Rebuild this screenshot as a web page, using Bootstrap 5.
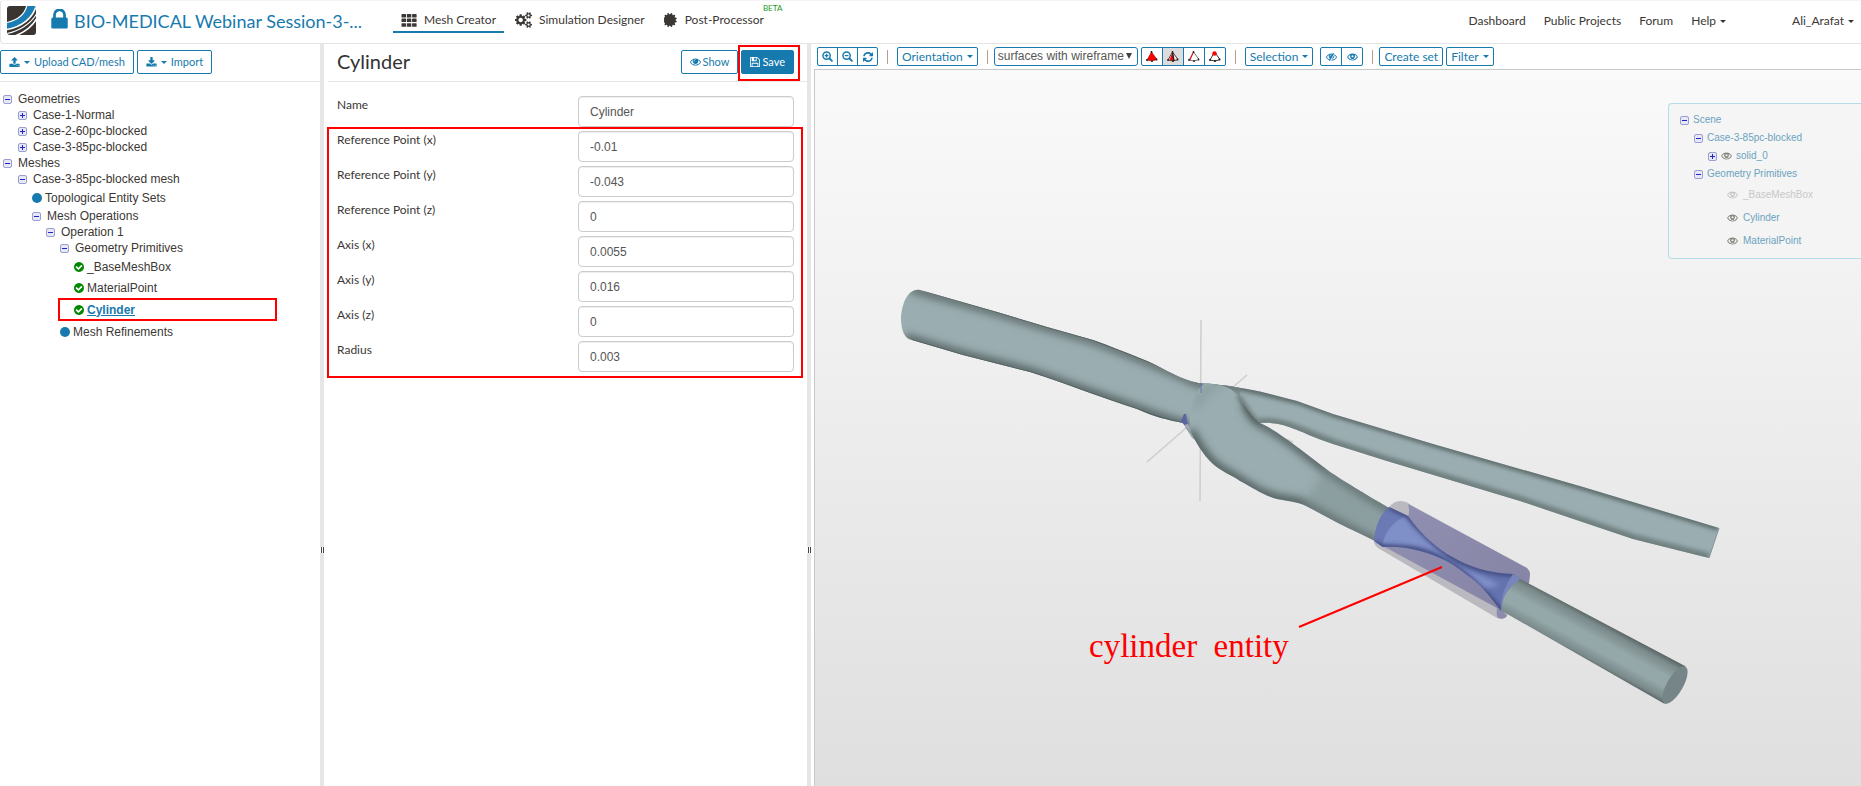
<!DOCTYPE html>
<html lang="en">
<head>
<meta charset="utf-8">
<meta name="viewport" content="width=device-width, initial-scale=1">
<title>Mesh Creator</title>
<link href="https://cdn.jsdelivr.net/npm/bootstrap@5.3.0/dist/css/bootstrap.min.css" rel="stylesheet">
<style>
  :root { --brand: #177aae; --ink: #3b3734; --note: #f00; }
  body { font-family: Lato, "Liberation Sans", sans-serif; font-size: 12px; line-height: 16px; color: var(--ink); background: #fff; }
  a { color: inherit; text-decoration: none; }
  svg.ico { fill: currentColor; flex: none; }
  .caret { width: 0; height: 0; border: 3px solid transparent; border-top-color: currentColor; border-bottom: 0; flex: none; }

  .topbar { height: 44px; border: 1px solid #e5e5e5; border-top-color: #f4f4f4; border-right: 0; border-radius: 4px 0 0 4px; padding: 0 7px 0 6px; }
  .project-lock { color: var(--brand); margin-left: 14px; }
  .project-title { font-size: 18px; line-height: 24px; color: var(--brand); width: 295px; margin-left: 6px; }
  .tabs { gap: 11px; }
  .tab-link { height: 24px; padding: 0 8px; gap: 7px; border-bottom: 2px solid transparent; }
  .tab-link.active { border-color: var(--brand); }
  .beta { position: absolute; left: 100%; bottom: 18px; margin-left: -9px; font-size: 8px; line-height: 10px; color: #1a9a1a; }
  .site-links { gap: 18px; }
  .user-link { margin-left: 48px; }

  .workspace { display: grid; grid-template-columns: 320fr 4px 483fr 4px 1050fr; }
  .splitter { background: #e6e6e6; }
  .grip { height: 6px; margin-top: 64vh; background: linear-gradient(90deg, #fff 1px, #444 1px 2px, #fff 2px 3px, #444 3px); }
  .pane-head { height: 38px; padding-top: 6px; border-bottom: 1px solid #e7e7e7; }
  .pane-head .btn-line { margin-right: 3px; }
  .props-head { margin-left: 4px; padding-left: 9px; padding-right: 13px; }
  .props-head .noted .btn-line { margin-right: 0; }
  .btn-line { --bs-btn-padding-x: 8px; --bs-btn-padding-y: 0; --bs-btn-font-size: 11px; --bs-btn-color: var(--brand); --bs-btn-border-color: var(--brand); --bs-btn-border-radius: 2px; --bs-btn-bg: #fff; --bs-btn-hover-bg: #e8f3f8; --bs-btn-hover-color: var(--brand); --bs-btn-hover-border-color: var(--brand); line-height: 22px; height: 24px; display: inline-flex; align-items: center; justify-content: center; gap: 4px; white-space: nowrap; }
  .props-head .btn-line { gap: 2px; }
  .btn-fill { --bs-btn-bg: var(--brand); --bs-btn-color: #fff; }
  .noted { position: relative; }
  .noted::after { content: ""; position: absolute; border: 2px solid var(--note); pointer-events: none; }
  .save-note::after { inset: -5px -6px -7px -3px; }

  .tree { font-family: "Liberation Sans", sans-serif; padding: 9px 0 0 3px; margin: 0; list-style: none; }
  .tree ul, .scene-tree ul { list-style: none; margin: 0; padding-left: 14px; }
  .tree > li > ul { padding-left: 15px; }
  .tree-row { display: flex; align-items: center; height: 16px; gap: 6px; }
  .tree-leaf { height: 21px; gap: 3px; }
  .tree-current { height: 23px; color: var(--brand); font-weight: 700; text-decoration: underline; }
  .tree-current::after { inset: 0 43px 0 -16px; }
  .disc { width: 10px; height: 10px; border-radius: 50%; background: var(--brand); flex: none; }
  .fold { width: 9px; height: 9px; border: 1px solid #9a9fd0; border-radius: 2px; flex: none; background: linear-gradient(#22c, #22c) center / 5px 1px no-repeat, #e6e8f8; }
  .fold.closed { background: linear-gradient(#22c, #22c) center / 5px 1px no-repeat, linear-gradient(#22c, #22c) center / 1px 5px no-repeat, #e6e8f8; }

  .pane-title { font-size: 20px; line-height: 26px; font-weight: 400; color: #333; margin: -2px 0 0; }
  .props { padding: 14px 13px 0; }
  .prop { display: grid; grid-template-columns: 241fr 216fr; margin-bottom: 4px; }
  .prop label { padding-top: 1px; }
  .prop .form-control { height: 31px; padding: 0 11px; font-family: "Liberation Sans", sans-serif; font-size: 12px; color: #555; border-color: #ccc; border-radius: 4px; box-shadow: inset 0 1px 1px rgba(0,0,0,.07); }
  .vector-note::after { inset: -4px -9px -6px -10px; }

  .viewer { padding-left: 3px; min-width: 0; display: flex; flex-direction: column; height: calc(100vh - 44px); }
  .toolbar { height: 25px; padding: 3px 0 0 3px; display: flex; align-items: flex-start; gap: 3px; }
  .toolbar .btn-line { height: 19px; line-height: 17px; --bs-btn-padding-x: 5px; }
  .toolbar .btn-group .btn-line { width: 22px; padding: 0; }
  .toolbar .zoom-group .btn-line { width: 21px; }
  .toolbar .wide { --bs-btn-font-size: 12px; --bs-btn-padding-x: 4px; }
  .rule { width: 1px; height: 14px; margin: 3px 6px 0; background: #bb9d94; }
  .rule-tight { margin-right: 3px; }
  .toolbar .form-select { height: 19px; width: 144px; padding: 0 12px 0 3px; font-family: "Liberation Sans", sans-serif; font-size: 12px; line-height: 17px; color: #555; border-color: var(--brand); border-radius: 3px; background-image: url("data:image/svg+xml,%3Csvg xmlns='http://www.w3.org/2000/svg' viewBox='0 0 6 6'%3E%3Cpath d='M0 0h6L3 6z' fill='%23444'/%3E%3C/svg%3E"); background-size: 6px 6px; background-position: right 5px top 5px; }
  .toolbar .btn-group .pressed { background: #dcdcdc; }
  .canvas3d { flex: 1; position: relative; min-height: 0; border-left: 1px solid #c8c8c8; border-top: 1px solid #c8c8c8; background: linear-gradient(#fafafa, #dfdfdf); overflow: hidden; }
  .scene-tree { position: absolute; top: 33px; right: 0; width: 193px; height: 156px; padding: 7px 0 0 11px; border: 1px solid #b5dde8; border-right: 0; border-radius: 4px 0 0 4px; background: rgba(244,244,244,.9); font-family: "Liberation Sans", sans-serif; font-size: 10px; line-height: 12px; color: #6ba3bf; }
  .scene-tree .tree-row { height: 18px; gap: 4px; }
  .scene-tree .tree-leaf { height: 23px; gap: 5px; padding-left: 19px; }
  .scene-tree .ico { color: #888880; }
  .scene-tree .dimmed, .scene-tree .dimmed .ico { color: #c8c8c8; }
</style>
</head>
<body class="overflow-hidden">

<svg class="d-none" xmlns="http://www.w3.org/2000/svg">
  <symbol id="i-lock" viewBox="300 190 1190 1350"><path d="M640 768h512v-192q0-106-75-181t-181-75-181 75-75 181v192zm832 96v576q0 40-28 68t-68 28h-960q-40 0-68-28t-28-68v-576q0-40 28-68t68-28h32v-192q0-184 132-316t316-132 316 132 132 316v192h32q40 0 68 28t28 68z"/></symbol>
  <symbol id="i-th" viewBox="0 0 16 13"><path d="M1 0h3.500q.5 0 .5.5v2.500q0 .5-.5.5h-3.500q-.5 0-.5-.5v-2.500q0-.5.5-.5zm5.300 0h3.500q.5 0 .5.5v2.500q0 .5-.5.5h-3.500q-.5 0-.5-.5v-2.500q0-.5.5-.5zm5.300 0h3.500q.5 0 .5.5v2.500q0 .5-.5.5h-3.500q-.5 0-.5-.5v-2.500q0-.5.5-.5zM1 4.600h3.500q.5 0 .5.5v2.500q0 .5-.5.5h-3.500q-.5 0-.5-.5v-2.500q0-.5.5-.5zm5.300 0h3.500q.5 0 .5.5v2.500q0 .5-.5.5h-3.500q-.5 0-.5-.5v-2.500q0-.5.5-.5zm5.300 0h3.500q.5 0 .5.5v2.500q0 .5-.5.5h-3.500q-.5 0-.5-.5v-2.500q0-.5.5-.5zM1 9.200h3.500q.5 0 .5.5v2.500q0 .5-.5.5h-3.500q-.5 0-.5-.5v-2.500q0-.5.5-.5zm5.300 0h3.500q.5 0 .5.5v2.500q0 .5-.5.5h-3.500q-.5 0-.5-.5v-2.500q0-.5.5-.5zm5.300 0h3.500q.5 0 .5.5v2.500q0 .5-.5.5h-3.500q-.5 0-.5-.5v-2.500q0-.5.5-.5z"/></symbol>
  <symbol id="i-cogs" viewBox="0 0 1920 1792"><path d="M896 896q0-106-75-181t-181-75-181 75-75 181 75 181 181 75 181-75 75-181zm768 512q0-52-38-90t-90-38-90 38-38 90q0 53 37.500 90.500t90.500 37.500 90.500-37.500 37.500-90.500zm0-1024q0-52-38-90t-90-38-90 38-38 90q0 53 37.500 90.500t90.500 37.500 90.500-37.500 37.500-90.500zm-384 421v185q0 10-7 19.500t-16 10.500l-155 24q-11 35-32 76 34 48 90 115 7 11 7 20 0 12-7 19-23 30-82.500 89.500t-78.500 59.500q-11 0-21-7l-115-90q-37 19-77 31-11 108-23 155-7 24-30 24h-186q-11 0-20-7.500t-10-17.500l-23-153q-34-10-75-31l-118 89q-7 7-20 7-11 0-21-8-144-133-144-160 0-9 7-19 10-14 41-53t47-61q-23-44-35-82l-152-24q-10-1-17-9.500t-7-19.500v-185q0-10 7-19.500t16-10.500l155-24q11-35 32-76-34-48-90-115-7-11-7-20 0-12 7-20 22-30 82-89t79-59q11 0 21 7l115 90q34-18 77-32 11-108 23-154 7-24 30-24h186q11 0 20 7.500t10 17.500l23 153q34 10 75 31l118-89q8-7 20-7 11 0 21 8 144 133 144 160 0 8-7 19-12 16-42 54t-45 60q23 48 34 82l152 23q10 2 17 10.500t7 19.500zm640 533v140q0 16-149 31-12 27-30 52 51 113 51 138 0 4-4 7-122 71-124 71-8 0-46-47t-52-68q-20 2-30 2t-30-2q-14 21-52 68t-46 47q-2 0-124-71-4-3-4-7 0-25 51-138-18-25-30-52-149-15-149-31v-140q0-16 149-31 13-29 30-52-51-113-51-138 0-4 4-7 4-2 35-20t59-34 30-16q8 0 46 46.500t52 67.500q20-2 30-2t30 2q51-71 92-112l6-2q4 0 124 70 4 3 4 7 0 25-51 138 17 23 30 52 149 15 149 31zm0-1024v140q0 16-149 31-12 27-30 52 51 113 51 138 0 4-4 7-122 71-124 71-8 0-46-47t-52-68q-20 2-30 2t-30-2q-14 21-52 68t-46 47q-2 0-124-71-4-3-4-7 0-25 51-138-18-25-30-52-149-15-149-31v-140q0-16 149-31 13-29 30-52-51-113-51-138 0-4 4-7 4-2 35-20t59-34 30-16q8 0 46 46.500t52 67.500q20-2 30-2t30 2q51-71 92-112l6-2q4 0 124 70 4 3 4 7 0 25-51 138 17 23 30 52 149 15 149 31z"/></symbol>
  <symbol id="i-burst" viewBox="128 128 1536 1536"><path d="M1376 896l138 135q30 28 20 70-12 41-52 51l-188 48 53 186q12 41-19 70-29 31-70 19l-186-53-48 188q-10 40-51 52-12 2-19 2-31 0-51-22l-135-138-135 138q-28 30-70 20-41-11-51-52l-48-188-186 53q-41 12-70-19-31-29-19-70l53-186-188-48q-40-10-52-51-10-42 20-70l138-135-138-135q-30-28-20-70 12-41 52-51l188-48-53-186q-12-41 19-70 29-31 70-19l186 53 48-188q10-41 51-51 41-12 70 19l135 139 135-139q29-30 70-19 41 10 51 51l48 188 186-53q41-12 70 19 31 29 19 70l-53 186 188 48q40 10 52 51 10 42-20 70z"/></symbol>
  <symbol id="i-eye" viewBox="0 300 1792 1300"><path d="M1664 960q-152-236-381-353 61 104 61 225 0 185-131.500 316.500t-316.500 131.500-316.500-131.500-131.500-316.500q0-121 61-225-229 117-381 353 133 205 333.500 326.500t434.500 121.500 434.500-121.500 333.500-326.500zm-720-384q0-20-14-34t-34-14q-125 0-214.500 89.500t-89.500 214.500q0 20 14 34t34 14 34-14 14-34q0-86 61-147t147-61q20 0 34-14t14-34zm848 384q0 34-20 69-140 230-376.500 368.500t-499.500 138.500-499.500-139-376.500-368q-20-35-20-69t20-69q140-229 376.500-368t499.500-139 499.500 139 376.500 368q20 35 20 69z"/></symbol>
  <symbol id="i-eye-bold" viewBox="0 300 1792 1300"><path fill-rule="evenodd" d="M0 960Q350 390 896 390T1792 960Q1440 1530 896 1530T0 960zM180 960Q330 740 520 640Q430 960 640 1180Q760 1290 896 1290T1150 1180Q1370 960 1270 640Q1470 740 1612 960Q1330 1400 896 1400T180 960zM896 660a170 170 0 1 0 1 0z"/></symbol>
  <symbol id="i-eye-off" viewBox="0 300 1792 1300"><path d="M1664 960q-152-236-381-353 61 104 61 225 0 185-131.500 316.500t-316.500 131.500-316.500-131.500-131.500-316.500q0-121 61-225-229 117-381 353 133 205 333.500 326.500t434.500 121.500 434.500-121.500 333.500-326.500zm-720-384q0-20-14-34t-34-14q-125 0-214.500 89.500t-89.500 214.500q0 20 14 34t34 14 34-14 14-34q0-86 61-147t147-61q20 0 34-14t14-34zm848 384q0 34-20 69-140 230-376.500 368.500t-499.500 138.500-499.500-139-376.500-368q-20-35-20-69t20-69q140-229 376.500-368t499.500-139 499.500 139 376.500 368q20 35 20 69z"/><path d="M1390 300L690 1600" stroke="#fff" stroke-width="200"/><path d="M1250 330L560 1570" stroke="currentColor" stroke-width="170"/></symbol>
  <symbol id="i-save" viewBox="128 128 1536 1536"><path d="M512 1536h768v-384h-768v384zm896 0h128v-896q0-14-10-38.500t-20-34.500l-281-281q-10-10-34-20t-39-10v416q0 40-28 68t-68 28h-576q-40 0-68-28t-28-68v-416h-128v1280h128v-416q0-40 28-68t68-28h832q40 0 68 28t28 68v416zm-384-928v-320q0-13-9.500-22.500t-22.500-9.500h-192q-13 0-22.500 9.500t-9.500 22.500v320q0 13 9.500 22.500t22.500 9.500h192q13 0 22.500-9.500t9.500-22.500zm640 32v928q0 40-28 68t-68 28h-1344q-40 0-68-28t-28-68v-1344q0-40 28-68t68-28h928q40 0 88 20t76 48l280 280q28 28 48 76t20 88z"/></symbol>
  <symbol id="i-up" viewBox="64 60 1664 1620"><path d="M1344 1472q0-26-19-45t-45-19-45 19-19 45 19 45 45 19 45-19 19-45zm256 0q0-26-19-45t-45-19-45 19-19 45 19 45 45 19 45-19 19-45zm128-224v320q0 40-28 68t-68 28h-1472q-40 0-68-28t-28-68v-320q0-40 28-68t68-28h427q21 56 70.500 92t110.500 36h256q61 0 110.500-36t70.500-92h427q40 0 68 28t28 68zm-325-648q-17 40-59 40h-256v448q0 26-19 45t-45 19h-256q-26 0-45-19t-19-45v-448h-256q-42 0-59-40-17-39 14-69l448-448q18-19 45-19t45 19l448 448q31 30 14 69z"/></symbol>
  <symbol id="i-down" viewBox="64 -20 1664 1620"><path d="M1344 1344q0-26-19-45t-45-19-45 19-19 45 19 45 45 19 45-19 19-45zm256 0q0-26-19-45t-45-19-45 19-19 45 19 45 45 19 45-19 19-45zm128-224v320q0 40-28 68t-68 28h-1472q-40 0-68-28t-28-68v-320q0-40 28-68t68-28h465l135 136q58 56 136 56t136-56l136-136h464q40 0 68 28t28 68zm-325-569q17 41-14 70l-448 448q-18 19-45 19t-45-19l-448-448q-31-29-14-70 17-39 59-39h256v-448q0-26 19-45t45-19h256q26 0 45 19t19 45v448h256q42 0 59 39z"/></symbol>
  <symbol id="i-refresh" viewBox="128 128 1536 1536"><path d="M1639 1056q0 5-1 7-64 268-268 434.500t-478 166.500q-146 0-282.500-55t-243.500-157l-129 129q-19 19-45 19t-45-19-19-45v-448q0-26 19-45t45-19h448q26 0 45 19t19 45-19 45l-137 137q71 66 161 102t187 36q134 0 250-65t186-179q11-17 53-117 8-23 30-23h192q13 0 22.500 9.500t9.500 22.500zm25-800v448q0 26-19 45t-45 19h-448q-26 0-45-19t-19-45 19-45l138-138q-148-137-349-137-134 0-250 65t-186 179q-11 17-53 117-8 23-30 23h-199q-13 0-22.500-9.500t-9.500-22.500v-7q65-268 270-434.500t480-166.500q146 0 284 55.500t245 156.500l130-129q19-19 45-19t45 19 19 45z"/></symbol>
  <symbol id="i-zin" viewBox="0 0 12 12"><path d="M5 3v4M3 5h4" fill="none" stroke="currentColor" stroke-width="1.400"/><path d="M8.200 8.200L10.800 10.800" fill="none" stroke="currentColor" stroke-width="2" stroke-linecap="round"/><circle cx="5" cy="5" r="4" fill="none" stroke="currentColor" stroke-width="1.600"/></symbol>
  <symbol id="i-zout" viewBox="0 0 12 12"><path d="M3 5h4" fill="none" stroke="currentColor" stroke-width="1.400"/><path d="M8.200 8.200L10.800 10.800" fill="none" stroke="currentColor" stroke-width="2" stroke-linecap="round"/><circle cx="5" cy="5" r="4" fill="none" stroke="currentColor" stroke-width="1.600"/></symbol>
  <symbol id="i-ok" viewBox="128 128 1536 1536"><path d="M1412 734q0-28-18-46l-91-90q-19-19-45-19t-45 19l-408 407-226-226q-19-19-45-19t-45 19l-91 90q-18 18-18 46 0 27 18 45l362 362q19 19 45 19 27 0 46-19l543-543q18-18 18-45zm252 162q0 209-103 385.500t-279.500 279.500-385.500 103-385.500-103-279.500-279.500-103-385.500 103-385.500 279.500-279.500 385.500-103 385.500 103 279.500 279.500 103 385.500z"/></symbol>
</svg>

<header class="topbar d-flex align-items-start">
  <a href="#" aria-label="Home" class="mt-1">
    <svg class="d-block" width="30" height="30" viewBox="0 0 30 30"><defs><clipPath id="logoClip"><rect y="1" width="29" height="29" rx="3"/></clipPath></defs><g clip-path="url(#logoClip)"><rect width="30" height="30" fill="#3b3532"/><path d="M0 17.500C11 15 18 9 20 0H30C26 14 16 22 0 24z" fill="#1a7db4"/><path d="M0 17.500C11 15 18 9 20 0" fill="none" stroke="#fff" stroke-width="1.200"/><path d="M0 24.500C15 22 26 13 29.500 0M8 31C18 27 27 20 31 11" fill="none" stroke="#fff" stroke-width="1.600"/><path d="M0 28.500C12 26 24 19 30 8" fill="none" stroke="#fff" stroke-width="1.100"/></g></svg>
  </a>
  <svg class="ico project-lock mt-2" width="17" height="20"><use href="#i-lock"/></svg>
  <a href="#" class="project-title text-nowrap mt-2">BIO-MEDICAL Webinar Session-3-...</a>
  <nav class="tabs d-flex ms-4 mt-2" aria-label="Workflow">
    <a href="#" class="tab-link active d-flex align-items-center"><svg class="ico" width="16" height="13"><use href="#i-th"/></svg>Mesh Creator</a>
    <a href="#" class="tab-link d-flex align-items-center px-0"><svg class="ico" width="17" height="16"><use href="#i-cogs"/></svg>Simulation Designer</a>
    <a href="#" class="tab-link d-flex align-items-center position-relative"><svg class="ico" width="14" height="14"><use href="#i-burst"/></svg>Post-Processor<span class="beta">BETA</span></a>
  </nav>
  <nav class="site-links d-flex ms-auto mt-2 pt-1" aria-label="Site">
    <a href="#">Dashboard</a><a href="#">Public Projects</a><a href="#">Forum</a>
    <a href="#" class="d-flex align-items-center gap-1">Help<span class="caret"></span></a>
    <a href="#" class="user-link d-flex align-items-center gap-1">Ali_Arafat<span class="caret"></span></a>
  </nav>
</header>

<main class="workspace">
  <section aria-label="Project tree">
    <div class="pane-head d-flex align-items-start">
      <button type="button" class="btn btn-line"><svg class="ico" width="11" height="10"><use href="#i-up"/></svg><span class="caret"></span>Upload CAD/mesh</button>
      <button type="button" class="btn btn-line"><svg class="ico" width="11" height="10"><use href="#i-down"/></svg><span class="caret"></span>Import</button>
    </div>
    <ul class="tree">
      <li><a href="#" class="tree-row"><i class="fold"></i>Geometries</a>
        <ul>
          <li><a href="#" class="tree-row"><i class="fold closed"></i>Case-1-Normal</a></li>
          <li><a href="#" class="tree-row"><i class="fold closed"></i>Case-2-60pc-blocked</a></li>
          <li><a href="#" class="tree-row"><i class="fold closed"></i>Case-3-85pc-blocked</a></li>
        </ul></li>
      <li><a href="#" class="tree-row"><i class="fold"></i>Meshes</a>
        <ul><li><a href="#" class="tree-row"><i class="fold"></i>Case-3-85pc-blocked mesh</a>
          <ul>
            <li><a href="#" class="tree-row tree-leaf"><i class="disc"></i>Topological Entity Sets</a></li>
            <li><a href="#" class="tree-row"><i class="fold"></i>Mesh Operations</a>
              <ul><li><a href="#" class="tree-row"><i class="fold"></i>Operation 1</a>
                <ul>
                  <li><a href="#" class="tree-row"><i class="fold"></i>Geometry Primitives</a>
                    <ul>
                      <li><a href="#" class="tree-row tree-leaf"><svg class="ico" width="10" height="10" color="#080"><use href="#i-ok"/></svg>_BaseMeshBox</a></li>
                      <li><a href="#" class="tree-row tree-leaf"><svg class="ico" width="10" height="10" color="#080"><use href="#i-ok"/></svg>MaterialPoint</a></li>
                      <li><a href="#" class="tree-row tree-leaf tree-current noted"><svg class="ico" width="10" height="10" color="#080"><use href="#i-ok"/></svg>Cylinder</a></li>
                    </ul></li>
                  <li><a href="#" class="tree-row tree-leaf"><i class="disc"></i>Mesh Refinements</a></li>
                </ul></li></ul></li>
          </ul></li></ul></li>
    </ul>
  </section>

  <div class="splitter"><div class="grip"></div></div>

  <section aria-label="Properties">
    <div class="pane-head props-head d-flex align-items-start">
      <h1 class="pane-title">Cylinder</h1>
      <button type="button" class="btn btn-line ms-auto"><svg class="ico" width="11" height="8"><use href="#i-eye"/></svg>Show</button>
      <div class="noted save-note"><button type="button" class="btn btn-line btn-fill"><svg class="ico" width="10" height="10"><use href="#i-save"/></svg>Save</button></div>
    </div>
    <form class="props">
      <div class="prop"><label for="f-name">Name</label><input id="f-name" class="form-control" value="Cylinder"></div>
      <div class="noted vector-note">
        <div class="prop"><label for="f-rx">Reference Point (x)</label><input id="f-rx" class="form-control" value="-0.01"></div>
        <div class="prop"><label for="f-ry">Reference Point (y)</label><input id="f-ry" class="form-control" value="-0.043"></div>
        <div class="prop"><label for="f-rz">Reference Point (z)</label><input id="f-rz" class="form-control" value="0"></div>
        <div class="prop"><label for="f-ax">Axis (x)</label><input id="f-ax" class="form-control" value="0.0055"></div>
        <div class="prop"><label for="f-ay">Axis (y)</label><input id="f-ay" class="form-control" value="0.016"></div>
        <div class="prop"><label for="f-az">Axis (z)</label><input id="f-az" class="form-control" value="0"></div>
        <div class="prop"><label for="f-r">Radius</label><input id="f-r" class="form-control" value="0.003"></div>
      </div>
    </form>
  </section>

  <div class="splitter"><div class="grip"></div></div>

  <section class="viewer" aria-label="Viewer">
    <div class="toolbar">
      <div class="btn-group zoom-group">
        <button type="button" class="btn btn-line" aria-label="Zoom in"><svg class="ico" width="11" height="11"><use href="#i-zin"/></svg></button>
        <button type="button" class="btn btn-line" aria-label="Zoom out"><svg class="ico" width="11" height="11"><use href="#i-zout"/></svg></button>
        <button type="button" class="btn btn-line" aria-label="Reset"><svg class="ico" width="10" height="10"><use href="#i-refresh"/></svg></button>
      </div>
      <span class="rule"></span>
      <button type="button" class="btn btn-line wide">Orientation<span class="caret"></span></button>
      <span class="rule rule-tight"></span>
      <select class="form-select" aria-label="Render mode"><option>surfaces with wireframe</option></select>
      <div class="btn-group">
        <button type="button" class="btn btn-line" aria-label="Pick volume"><svg width="12" height="11" viewBox="0 0 12 11"><path d="M5.500 1L1 9l5 1 5-1.500z" fill="red" stroke="#900" stroke-width=".6"/><path d="M1 8v2M10.500 7.500v2M5.500 0v2M6 9.500v1.500" stroke="#222" stroke-width="1.600"/></svg></button>
        <button type="button" class="btn btn-line pressed" aria-label="Pick face"><svg width="12" height="11" viewBox="0 0 12 11"><path d="M5.500 1L1 9l5 1 5-1.500z" fill="#eee" stroke="#333" stroke-width=".9"/><path d="M5.500 1L2.500 9 7 10z" fill="red"/><path d="M5.500 1L7 10M1 8v2M10.500 7.500v2M5.500 0v2M6 9v2" stroke="#222" stroke-width="1.400"/></svg></button>
        <button type="button" class="btn btn-line" aria-label="Pick edge"><svg width="12" height="11" viewBox="0 0 12 11"><path d="M5.500 1L1 9l5 1 5-1.500z" fill="#fff" stroke="#666" stroke-width=".9"/><path d="M5.500 1L2 9" stroke="red" stroke-width="1"/><path d="M1 8v2M10.500 7.500v2M5.500 0v2M6 9v2" stroke="#222" stroke-width="1.400"/></svg></button>
        <button type="button" class="btn btn-line" aria-label="Pick vertex"><svg width="12" height="11" viewBox="0 0 12 11"><path d="M5.500 1L1 9l5 1 5-1.500z" fill="#fff" stroke="#333" stroke-width="1"/><path d="M1 8v2M10.500 7.500v2M6 9v2" stroke="#222" stroke-width="1.600"/><circle cx="5.500" cy="2.500" r="2.200" fill="red"/></svg></button>
      </div>
      <span class="rule"></span>
      <button type="button" class="btn btn-line wide">Selection<span class="caret"></span></button>
      <div class="btn-group ms-1">
        <button type="button" class="btn btn-line" aria-label="Hide selection"><svg class="ico" width="11" height="8"><use href="#i-eye-off"/></svg></button>
        <button type="button" class="btn btn-line" aria-label="Show all"><svg class="ico" width="11" height="8"><use href="#i-eye-bold"/></svg></button>
      </div>
      <span class="rule rule-tight"></span>
      <button type="button" class="btn btn-line wide">Create set</button>
      <button type="button" class="btn btn-line wide">Filter<span class="caret"></span></button>
    </div>

    <div class="canvas3d">
      <svg class="d-block w-100 h-100" viewBox="815 70 1046 716" role="img" aria-label="Artery model with a cylinder entity">
        <defs>
          <filter id="soft" x="-20%" y="-20%" width="140%" height="140%"><feGaussianBlur stdDeviation="4"/></filter>
          <filter id="soft2" x="-20%" y="-20%" width="140%" height="140%"><feGaussianBlur stdDeviation="2"/></filter>
          <clipPath id="cTrunk"><path d="M920 290C908 288 902 303 901 318C901 331 905 339 912 340L963 355L1030 372C1070 385 1100 397 1137 409C1155 417 1168 420 1183 423L1192 438L1240 470L1240 388C1220 384 1210 385 1198 383C1180 379 1165 369 1147 361C1125 352 1110 346 1093 340L1047 327L997 312Z"/></clipPath>
          <clipPath id="cBranch"><path d="M1198 383C1215 384 1225 385 1247 389C1265 392 1280 397 1297 401L1333 414L1433 444L1583 487L1719 528L1709 558L1633 539L1520 501L1387 461L1333 444C1315 438 1305 433 1297 430C1285 425 1275 422 1260 423L1240 440L1198 420Z"/></clipPath>
          <clipPath id="cBulb"><path d="M1205 383C1215 384 1228 386 1233 391C1243 400 1248 414 1260 423C1275 430 1285 438 1300 449L1330 472C1345 482 1365 494 1389 508L1375 541C1360 533 1350 529 1340 524L1310 508C1300 502 1288 501 1277 499C1262 495 1252 487 1240 481C1230 474 1222 472 1213 464C1202 454 1195 440 1190 431C1188 410 1195 390 1205 383Z"/></clipPath>
          <clipPath id="cNeck"><path d="M1389 507L1408 516C1420 533 1432 544 1447 554C1470 568 1490 573 1513 574L1520 579C1508 588 1501 600 1501 611C1490 596 1480 583 1467 575C1455 565 1445 560 1440 558C1420 550 1405 546 1383 547L1374 541C1375 528 1380 514 1389 507Z"/></clipPath>
          <linearGradient id="gTail" gradientUnits="userSpaceOnUse" x1="1602" y1="622" x2="1582" y2="659"><stop offset="0" stop-color="#5c6767"/><stop offset=".12" stop-color="#7b8a8b"/><stop offset=".4" stop-color="#94a7a9"/><stop offset=".65" stop-color="#94a7a9"/><stop offset=".9" stop-color="#7b8a8b"/><stop offset="1" stop-color="#5c6767"/></linearGradient>
          <linearGradient id="gVeil" x1="0" y1="0" x2="1" y2="1"><stop offset="0" stop-color="#9290b2"/><stop offset="1" stop-color="#8483a4"/></linearGradient>
        </defs>
        <g stroke="#cdcdcd" stroke-width="1.500"><path d="M1201 320L1200 501M1147 462L1247 375M1285 439L1293 442"/></g>
        <g clip-path="url(#cBranch)">
          <rect x="1190" y="370" width="540" height="200" fill="#9aadb0"/>
          <path d="M1190 380L1247 389L1297 401L1333 414L1433 444L1583 487L1719 528" fill="none" stroke="#5c6969" stroke-width="6" filter="url(#soft2)"/>
          <path d="M1709 558L1633 539L1520 501L1387 461L1333 444L1297 430Q1280 422 1260 423" fill="none" stroke="#6f7f7f" stroke-width="10" filter="url(#soft2)"/>
        </g>
        <path d="M1719 528L1709 558" stroke="#839596" stroke-width="1"/>
        <g clip-path="url(#cTrunk)">
          <rect x="890" y="280" width="360" height="200" fill="#9aadb0"/>
          <path d="M910 288L997 312L1047 327L1093 340Q1120 350 1147 361T1198 383L1250 389" fill="none" stroke="#586363" stroke-width="8" filter="url(#soft)"/>
          <path d="M905 338L963 355L1030 372C1070 385 1100 397 1137 409Q1165 420 1190 426" fill="none" stroke="#4c5757" stroke-width="8" filter="url(#soft)"/>
          <path d="M925 291L997 312L1047 327L1093 340Q1120 350 1147 361T1198 383M912 340L963 355L1030 372C1070 385 1100 397 1137 409Q1165 420 1183 423" fill="none" stroke="#4a5454" stroke-width="1.500" opacity=".7"/>
        </g>
        <g clip-path="url(#cBulb)">
          <rect x="1180" y="375" width="220" height="180" fill="#9aadb0"/>
          <path d="M1190 431C1195 440 1202 454 1213 464C1222 472 1230 474 1240 481L1260 493L1277 499L1297 502L1310 508L1340 524L1380 545" fill="none" stroke="#4c5757" stroke-width="9" filter="url(#soft)"/>
          <path d="M1245 402C1250 414 1252 418 1260 423C1275 430 1285 438 1300 449L1330 472L1365 494L1395 512" fill="none" stroke="#4c5757" stroke-width="8" filter="url(#soft)"/>
          <path d="M1330 460L1400 500L1370 550L1300 510Z" fill="#7d8e8e" opacity=".45" filter="url(#soft)"/>
          <path d="M1222 384Q1204 386 1196 408" fill="none" stroke="#7d8e90" stroke-width="7" opacity=".5" filter="url(#soft)"/>
        </g>
        <path d="M1238 396C1247 406 1249 416 1260 423" fill="none" stroke="#4a5352" stroke-width="3" opacity=".8" filter="url(#soft2)"/>
        <path d="M1184 414L1181 421Q1183 425 1188 426L1186 414Z" fill="#5b64a4"/>
        <path d="M1201 383V393" stroke="#6a74b0"/>
        <path d="M1184 425L1191 432L1188 424Z" fill="#aaa9bd"/>
        <path d="M1389 507Q1394 501 1400 501Q1406 501 1411 505L1527 568Q1530 571 1530 574L1529 583L1507 616Q1505 620 1497 618L1378 548Q1374 545 1374 541Z" fill="#b9b9bf"/>
        <path d="M1408 504L1527 568Q1530 571 1530 574L1529 583L1502 613L1497 608L1383 546Q1405 536 1408 517Q1410 510 1408 504Z" fill="url(#gVeil)"/>
        <path d="M1497 608Q1496 615 1498 618Q1504 620 1507 616L1502 610Z" fill="#8d8caf"/>
        <g clip-path="url(#cNeck)">
          <rect x="1370" y="500" width="160" height="120" fill="#6473af"/>
          <path d="M1378 545Q1382 522 1405 514L1412 520L1455 562L1500 585L1480 590L1435 558Z" fill="#7f8fc7" filter="url(#soft2)"/>
          <path d="M1389 507Q1372 525 1375 545L1382 548Q1384 526 1408 514Z" fill="#6b7ab5"/>
          <path d="M1389 507L1408 516Q1420 533 1447 554Q1475 573 1520 575" fill="none" stroke="#3a4478" stroke-width="4" filter="url(#soft2)"/>
          <path d="M1374 543L1383 547Q1420 546 1440 558Q1470 573 1501 611" fill="none" stroke="#303a70" stroke-width="4" filter="url(#soft2)"/>
          <path d="M1513 574Q1500 592 1501 611L1520 590L1522 578Z" fill="#7886bd"/>
        </g>
        <path d="M1520 579L1685 666Q1688 670 1686 676L1672 700Q1667 705 1663 703L1502 611Q1500 594 1520 579Z" fill="url(#gTail)"/>
        <ellipse cx="1675" cy="685" rx="8" ry="21" transform="rotate(30 1675 685)" fill="#768587"/>
        <path d="M1299 627L1442 567" stroke="#f00" stroke-width="2"/>
        <text x="1089" y="657" fill="#f00" font-family="'Liberation Serif', serif" font-size="33" xml:space="preserve">cylinder&#160; entity</text>
      </svg>

      <div class="scene-tree">
        <a href="#" class="tree-row"><i class="fold"></i>Scene</a>
        <ul>
          <li><a href="#" class="tree-row"><i class="fold"></i>Case-3-85pc-blocked</a>
            <ul><li><a href="#" class="tree-row"><i class="fold closed"></i><svg class="ico" width="11" height="8"><use href="#i-eye-bold"/></svg>solid_0</a></li></ul></li>
          <li><a href="#" class="tree-row"><i class="fold"></i>Geometry Primitives</a>
            <ul>
              <li><a href="#" class="tree-row tree-leaf dimmed"><svg class="ico" width="11" height="8"><use href="#i-eye-bold"/></svg>_BaseMeshBox</a></li>
              <li><a href="#" class="tree-row tree-leaf"><svg class="ico" width="11" height="8"><use href="#i-eye-bold"/></svg>Cylinder</a></li>
              <li><a href="#" class="tree-row tree-leaf"><svg class="ico" width="11" height="8"><use href="#i-eye-bold"/></svg>MaterialPoint</a></li>
            </ul></li>
        </ul>
      </div>
    </div>
  </section>
</main>
<script src="https://cdn.jsdelivr.net/npm/bootstrap@5.3.0/dist/js/bootstrap.bundle.min.js"></script>
</body>
</html>
